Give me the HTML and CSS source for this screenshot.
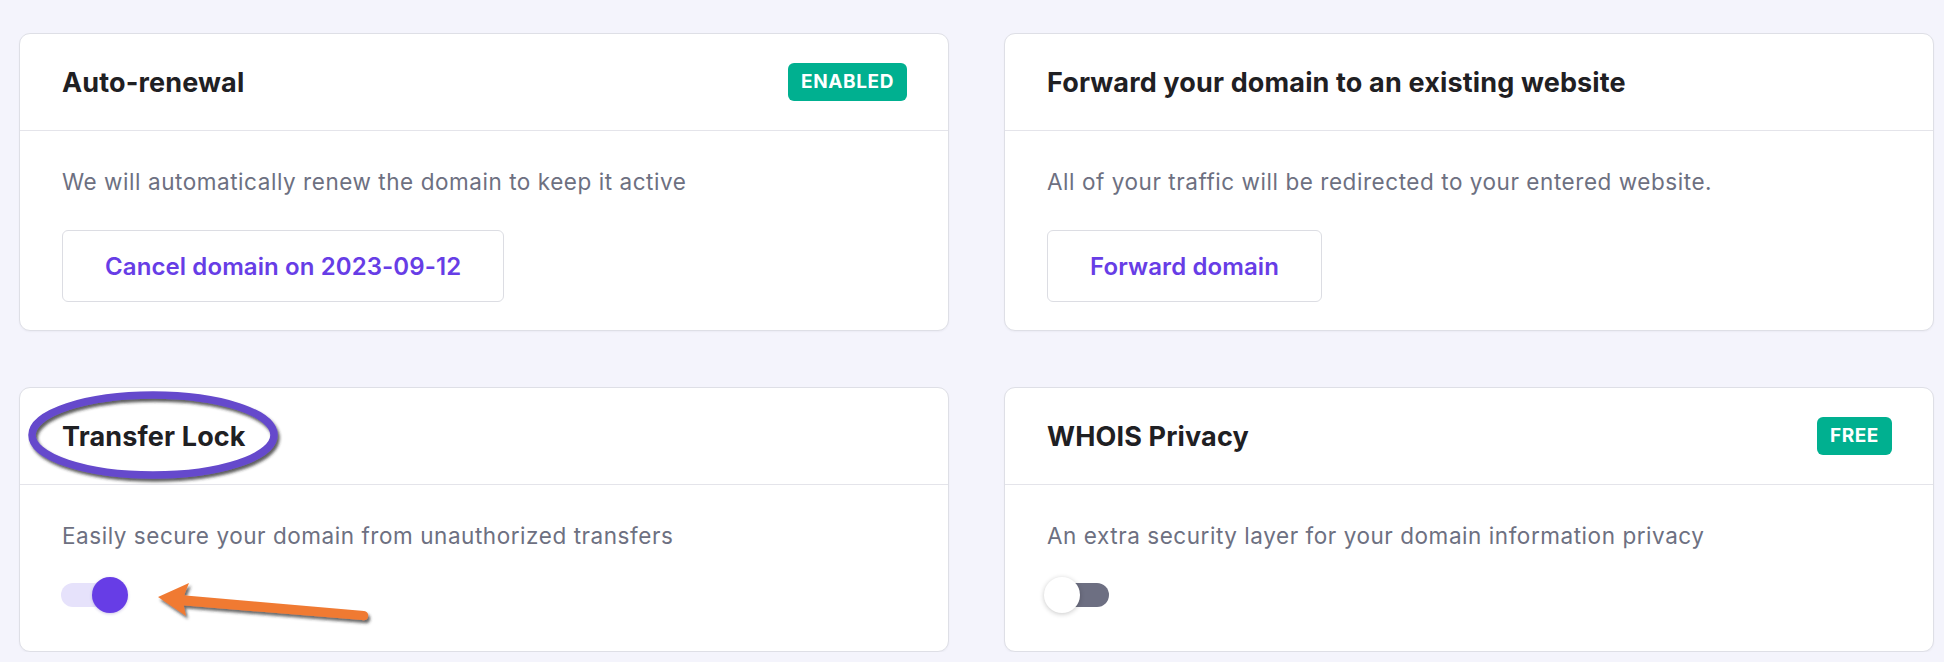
FILE: index.html
```html
<!DOCTYPE html>
<html lang="en">
<head>
<meta charset="utf-8">
<title>Domain settings</title>
<link rel="stylesheet" href="styles.css">
</head>
<body>
<main class="grid">
  <section class="card">
    <header class="card-head">
      <h2 class="title">Auto-renewal</h2>
      <span class="badge">ENABLED</span>
    </header>
    <div class="card-body">
      <p class="desc">We will automatically renew the domain to keep it active</p>
      <button class="btn">Cancel domain on 2023-09-12</button>
    </div>
  </section>

  <section class="card">
    <header class="card-head">
      <h2 class="title">Forward your domain to an existing website</h2>
    </header>
    <div class="card-body">
      <p class="desc">All of your traffic will be redirected to your entered website.</p>
      <button class="btn">Forward domain</button>
    </div>
  </section>

  <section class="card card-annotated">
    <header class="card-head">
      <h2 class="title">Transfer Lock</h2>
    </header>
    <div class="card-body">
      <p class="desc">Easily secure your domain from unauthorized transfers</p>
      <div class="toggle-row">
        <span class="toggle on"><span class="knob"></span></span>
      </div>
    </div>
    <svg class="mark-ellipse" width="260" height="100" viewBox="0 0 260 100" aria-hidden="true">
      <defs>
        <filter id="sh1" x="-10%" y="-20%" width="130%" height="150%">
          <feDropShadow dx="2" dy="3" stdDeviation="1.6" flood-color="#2a2a2a" flood-opacity="0.75"/>
        </filter>
      </defs>
      <ellipse cx="125" cy="44" rx="121" ry="40" fill="none" stroke="#6549cc" stroke-width="7.5" filter="url(#sh1)"/>
    </svg>
    <svg class="mark-arrow" width="240" height="60" viewBox="0 0 240 60" aria-hidden="true">
      <defs>
        <filter id="sh2" x="-10%" y="-30%" width="130%" height="180%">
          <feDropShadow dx="2" dy="3" stdDeviation="1.4" flood-color="#2a2a2a" flood-opacity="0.7"/>
        </filter>
      </defs>
      <g filter="url(#sh2)" fill="#f07a33">
        <path d="M30 21 L214 37 Q219 38 218 43 Q217 47 212 46 L29 31 Z"/>
        <path d="M8 23 L39 9 Q35 18 33 26 Q34 34 36 42 Z"/>
      </g>
    </svg>
  </section>

  <section class="card">
    <header class="card-head">
      <h2 class="title">WHOIS Privacy</h2>
      <span class="badge">FREE</span>
    </header>
    <div class="card-body">
      <p class="desc">An extra security layer for your domain information privacy</p>
      <div class="toggle-row">
        <span class="toggle"><span class="knob"></span></span>
      </div>
    </div>
  </section>
</main>
</body>
</html>
```

FILE: styles.css
```css
* { box-sizing: border-box; }

html, body {
  margin: 0;
  padding: 0;
  background: #f4f4fc;
  font-family: Inter, "DejaVu Sans", sans-serif;
}

.grid {
  display: grid;
  grid-template-columns: 930px 930px;
  column-gap: 55px;
  row-gap: 56px;
  padding: 33px 10px 0 19px;
}

.card {
  position: relative;
  background: #ffffff;
  border: 1px solid #dedfe6;
  border-radius: 11px;
  box-shadow: 0 1px 2px rgba(30, 30, 60, 0.04);
  display: flex;
  flex-direction: column;
}

.card-head {
  height: 97px;
  border-bottom: 1.5px solid #e4e4ea;
  display: flex;
  align-items: center;
  justify-content: space-between;
  padding: 0 41px 0 42px;
}

.title {
  margin: 0;
  font-size: 27px;
  font-weight: 700;
  color: #1f2023;
  letter-spacing: 0.15px;
}

.badge {
  background: #00b090;
  color: #ffffff;
  font-size: 19px;
  font-weight: 700;
  letter-spacing: 0.6px;
  line-height: 38px;
  height: 38px;
  padding: 0 13px;
  border-radius: 6px;
}

.card-body {
  padding: 38px 42px 28px;
  flex: 1;
}

.desc {
  margin: 0;
  font-size: 22.5px;
  line-height: 26px;
  letter-spacing: 0.55px;
  color: #6d7081;
}

.btn {
  margin-top: 35px;
  height: 72px;
  padding: 0 42px;
  background: #ffffff;
  border: 1.5px solid #dcdde3;
  border-radius: 6px;
  font-family: Inter, "DejaVu Sans", sans-serif;
  font-size: 24px;
  font-weight: 600;
  letter-spacing: 0.1px;
  color: #673de6;
  display: block;
}

.toggle-row {
  margin-top: 28px;
  margin-bottom: 10px;
  height: 36px;
  display: flex;
  align-items: center;
}

.toggle {
  position: relative;
  width: 62px;
  height: 24px;
  border-radius: 12px;
  background: #6d6f82;
}

.toggle .knob {
  position: absolute;
  top: -6px;
  left: -3px;
  width: 36px;
  height: 36px;
  border-radius: 50%;
  background: #ffffff;
  box-shadow: 0 1px 5px rgba(0, 0, 0, 0.22);
}

.toggle.on {
  background: #e6e2fb;
  margin-left: -1px;
  width: 64px;
}

.toggle.on .knob {
  left: 31px;
  background: #673de6;
  box-shadow: 0 1px 3px rgba(60, 30, 160, 0.25);
}

.mark-ellipse {
  position: absolute;
  left: 8px;
  top: 3px;
  pointer-events: none;
}

.mark-arrow {
  position: absolute;
  left: 130px;
  top: 186px;
  pointer-events: none;
}
```
